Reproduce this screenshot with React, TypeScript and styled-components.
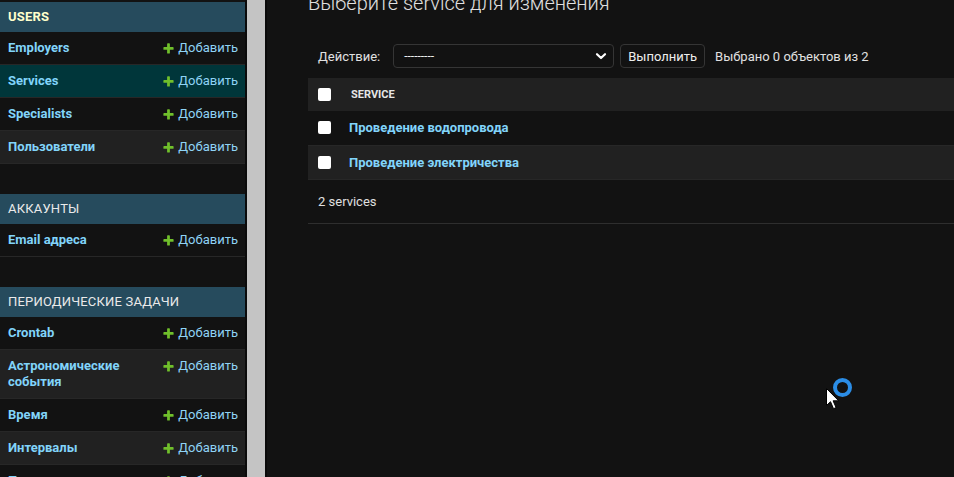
import styled, { createGlobalStyle } from "styled-components";

const GlobalStyle = createGlobalStyle`
  html, body {
    margin: 0;
    padding: 0;
    background: #121212;
    overflow: hidden;
  }
  body {
    font-family: Roboto, "Liberation Sans", "Noto Sans", sans-serif;
    color: #eeeeee;
    font-size: 13px;
  }
`;

type RowKind = "plain" | "stripe" | "current";

type ModelItem = { name: string; kind: RowKind };

type AppModule = { title: string; current?: boolean; models: ModelItem[] };

const MODULES: AppModule[] = [
  {
    title: "Users",
    current: true,
    models: [
      { name: "Employers", kind: "plain" },
      { name: "Services", kind: "current" },
      { name: "Specialists", kind: "plain" },
      { name: "Пользователи", kind: "stripe" },
    ],
  },
  {
    title: "Аккаунты",
    models: [{ name: "Email адреса", kind: "plain" }],
  },
  {
    title: "Периодические задачи",
    models: [
      { name: "Crontab", kind: "plain" },
      { name: "Астрономические события", kind: "stripe" },
      { name: "Время", kind: "plain" },
      { name: "Интервалы", kind: "stripe" },
      { name: "Периодические задачи", kind: "plain" },
    ],
  },
];

const SERVICES = [
  { name: "Проведение водопровода", stripe: false },
  { name: "Проведение электричества", stripe: true },
];

export default function App() {
  return (
    <>
      <GlobalStyle />
      <Page>
        <Sidebar>
          {MODULES.map((m) => (
            <Module key={m.title}>
              <Caption $current={!!m.current}>{m.title}</Caption>
              {m.models.map((model) => (
                <ModelRow key={model.name} $kind={model.kind}>
                  <ModelLink>{model.name}</ModelLink>
                  <AddLink>
                    <PlusIcon />
                    Добавить
                  </AddLink>
                </ModelRow>
              ))}
            </Module>
          ))}
        </Sidebar>
        <SidebarToggle />
        <Main>
          <Title>Выберите service для изменения</Title>

          <Actions>
            <ActionLabel>Действие:</ActionLabel>
            <Select>
              <span>---------</span>
              <ChevronIcon />
            </Select>
            <GoButton type="button">Выполнить</GoButton>
            <Counter>Выбрано 0 объектов из 2</Counter>
          </Actions>

          <ResultTable>
            <thead>
              <tr>
                <CheckHead>
                  <Checkbox type="checkbox" />
                </CheckHead>
                <ColumnHead>Service</ColumnHead>
              </tr>
            </thead>
            <tbody>
              {SERVICES.map((s) => (
                <ResultRow key={s.name} $stripe={s.stripe}>
                  <CheckCell>
                    <Checkbox type="checkbox" />
                  </CheckCell>
                  <NameCell>{s.name}</NameCell>
                </ResultRow>
              ))}
            </tbody>
          </ResultTable>
          <Paginator>2 services</Paginator>
        </Main>
      </Page>
      <BusyCursor />
    </>
  );
}

/* --- Styled Components --- */

const Page = styled.div`
  display: flex;
  height: 477px;
  overflow: hidden;
`;

const Sidebar = styled.nav`
  width: 245px;
  flex-shrink: 0;
  padding-top: 2px;
  background: #121212;
`;

const Module = styled.div`
  margin-bottom: 30px;
`;

const Caption = styled.div<{ $current: boolean }>`
  padding: 8px;
  line-height: 14px;
  font-size: 13px;
  text-transform: uppercase;
  background: #264b5d;
  color: ${({ $current }) => ($current ? "#ffffcc" : "#eaeaea")};
  font-weight: ${({ $current }) => ($current ? 700 : 400)};
  letter-spacing: 0.2px;
`;

const ROW_BG: Record<RowKind, string> = {
  plain: "#121212",
  stripe: "#212121",
  current: "#00363a",
};

const ModelRow = styled.div<{ $kind: RowKind }>`
  display: flex;
  justify-content: space-between;
  align-items: flex-start;
  gap: 12px;
  padding: 8px 7px 8px 8px;
  line-height: 16px;
  border-bottom: 1px solid #272727;
  background: ${({ $kind }) => ROW_BG[$kind]};
`;

const ModelLink = styled.a`
  color: #81d4fa;
  font-weight: 700;
  font-size: 13px;
  max-width: 150px;
`;

const AddLink = styled.a`
  display: flex;
  align-items: center;
  gap: 3px;
  flex-shrink: 0;
  color: #8fd3f5;
  font-size: 13px;
  white-space: nowrap;
`;

const SidebarToggle = styled.div`
  width: 18px;
  flex-shrink: 0;
  background: #c4c4c4;
  border-left: 2px solid #0a0a0a;
  border-right: 2px solid #0a0a0a;
`;

const Main = styled.main`
  flex: 1;
  min-width: 0;
  padding-left: 41px;
  display: flex;
  flex-direction: column;
`;

const Title = styled.h1`
  margin: -9px 0 19px;
  font-size: 20px;
  line-height: 24px;
  font-weight: 300;
  color: #e0e0e0;
  white-space: nowrap;
`;

const Actions = styled.div`
  display: flex;
  align-items: center;
  padding: 10px;
  color: #e0e0e0;
`;

const ActionLabel = styled.label`
  margin-right: 13px;
`;

const Select = styled.div`
  width: 221px;
  height: 24px;
  box-sizing: border-box;
  display: flex;
  align-items: center;
  justify-content: space-between;
  padding: 0 6px 0 10px;
  border: 1px solid #353535;
  border-radius: 4px;
  background: #121212;
  color: #eeeeee;
  font-size: 12px;
`;

const GoButton = styled.button`
  height: 24px;
  margin-left: 6px;
  padding: 0 7px;
  border: 1px solid #353535;
  border-radius: 4px;
  background: #121212;
  color: #eeeeee;
  font-family: inherit;
  font-size: 13px;
`;

const Counter = styled.span`
  margin-left: 10px;
  color: #e0e0e0;
`;

const ResultTable = styled.table`
  width: 100%;
  border-collapse: collapse;
`;

const CheckHead = styled.th`
  width: 33px;
  box-sizing: border-box;
  padding: 0 0 0 10px;
  height: 33px;
  background: #212121;
  text-align: left;
  vertical-align: middle;
`;

const ColumnHead = styled.th`
  padding: 0 10px;
  height: 33px;
  background: #212121;
  text-align: left;
  font-size: 11px;
  font-weight: 700;
  text-transform: uppercase;
  color: #e6e6e6;
`;

const ResultRow = styled.tr<{ $stripe: boolean }>`
  background: ${({ $stripe }) => ($stripe ? "#212121" : "#121212")};
  border-bottom: 1px solid #272727;
`;

const CheckCell = styled.td`
  padding: 10px 0 10.5px 10px;
  line-height: 13px;
  vertical-align: middle;
`;

const NameCell = styled.td`
  padding: 10px 8px 10.5px;
  line-height: 13px;
  font-weight: 700;
  color: #81d4fa;
  vertical-align: middle;
`;

const Checkbox = styled.input`
  appearance: none;
  display: block;
  width: 13px;
  height: 13px;
  margin: 0;
  border-radius: 2px;
  background: #ffffff;
`;

const Paginator = styled.div`
  padding: 11px 10px 10px;
  line-height: 22px;
  border-bottom: 1px solid #2e2e2e;
  color: #e0e0e0;
`;

const CursorLayer = styled.svg`
  position: fixed;
  left: 822px;
  top: 375px;
`;

const PlusIcon = () => (
  <svg width="13" height="13" viewBox="0 0 1792 1792">
    <path
      fill="#70bf2b"
      d="M1600 796v192q0 40-28 68t-68 28h-416v416q0 40-28 68t-68 28h-192q-40 0-68-28t-28-68v-416h-416q-40 0-68-28t-28-68v-192q0-40 28-68t68-28h416v-416q0-40 28-68t68-28h192q40 0 68 28t28 68v416h416q40 0 68 28t28 68z"
    />
  </svg>
);

const ChevronIcon = () => (
  <svg width="12" height="12" viewBox="0 0 12 12">
    <path
      d="M2 4.2 6 8l4-3.8"
      fill="none"
      stroke="#ffffff"
      strokeWidth="2.2"
      strokeLinecap="round"
      strokeLinejoin="round"
    />
  </svg>
);

const BusyCursor = () => (
  <CursorLayer width="34" height="40" viewBox="0 0 34 40">
    <circle cx="20.5" cy="12.5" r="7.5" fill="none" stroke="#2b8de6" strokeWidth="4" />
    <path
      d="M4.5 13.5v17l4-3.8 3 7 2.6-1.1-3-6.8h5.6z"
      fill="#ffffff"
      stroke="#000000"
      strokeWidth="1"
      strokeLinejoin="round"
    />
  </CursorLayer>
);
